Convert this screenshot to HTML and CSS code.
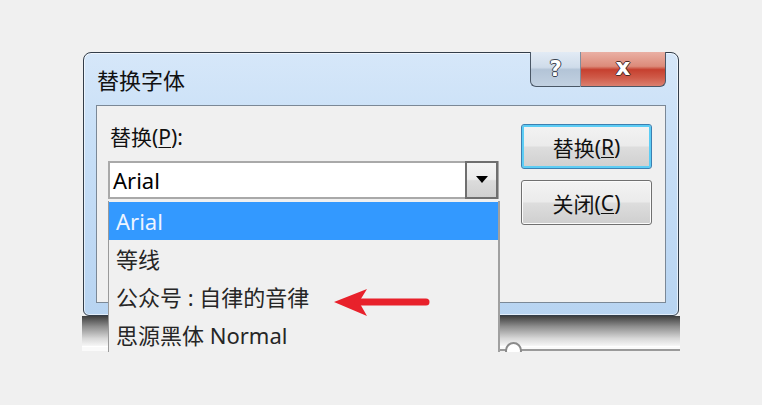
FILE: index.html
```html
<!DOCTYPE html>
<html lang="zh-CN">
<head>
<meta charset="utf-8">
<title>替换字体</title>
<link rel="stylesheet" href="styles.css">
</head>
<body>
<div class="shot">
  <div class="window">
    <div class="titlebar">
      <span class="title">替换字体</span>
      <div class="caption">
        <div class="cap help">?</div>
        <div class="cap close">x</div>
      </div>
    </div>
    <div class="client">
      <div class="left">
        <div class="label">替换(<u>P</u>):</div>
        <div class="combo">
          <span class="combo-text">Arial</span>
          <span class="combo-btn"><svg width="12" height="7" viewBox="0 0 12 7"><path d="M0 0H12L6 7Z" fill="#000"/></svg></span>
        </div>
      </div>
      <div class="right">
        <div class="btn default">替换(<u>R</u>)</div>
        <div class="btn">关闭(<u>C</u>)</div>
      </div>
    </div>
  </div>
  <div class="below">
    <div class="shadow"></div>
    <div class="strip"><span class="knob"></span></div>
  </div>
  <ul class="list">
    <li class="item selected">Arial</li>
    <li class="item">等线</li>
    <li class="item">公众号 : 自律的音律</li>
    <li class="item">思源黑体 Normal</li>
  </ul>
  <svg class="arrow" width="98" height="30" viewBox="0 0 98 30">
    <path d="M2 14 L35 1 L27 14 L35 28 Z" fill="#e8212b"/>
    <path d="M26 14 H94" stroke="#e8212b" stroke-width="7" stroke-linecap="round"/>
  </svg>
</div>
</body>
</html>
```

FILE: styles.css
```css
* { box-sizing: border-box; }
html, body { margin: 0; padding: 0; }
body {
  background: #f0f0f0;
  width: 762px;
  height: 405px;
  overflow: hidden;
  font-family: "Noto Sans", "Noto Sans CJK SC", sans-serif;
  padding: 52px 0 0 82px;
}
.shot {
  position: relative;
  width: 598px;
  height: 300px;
  overflow: hidden;
}
.window {
  margin-left: 1px;
  width: 596px;
  height: 264px;
  border: 1px solid #333d49;
  border-radius: 8px 8px 6px 6px;
  background: linear-gradient(180deg, #d6e7f9 0%, #c9e0f7 30%, #bfd9f4 70%, #b8d4f1 100%);
  box-shadow: inset 0 0 0 1px rgba(255,255,255,0.6);
  display: flex;
  flex-direction: column;
}
.titlebar {
  height: 52px;
  display: flex;
  justify-content: space-between;
  align-items: flex-start;
  padding-left: 13px;
}
.title {
  font-size: 22px;
  line-height: 28px;
  margin-top: 13px;
  color: #111;
}
.caption {
  display: flex;
  margin-top: -1px;
  margin-right: 12px;
}
.cap {
  height: 35px;
  display: flex;
  align-items: center;
  justify-content: center;
  font-family: "DejaVu Sans", sans-serif;
  font-weight: bold;
  color: #fff;
  border: 1px solid #4a5766;
  border-top: none;
}
.help {
  width: 51px;
  border-radius: 0 0 0 6px;
  border-right: 1px solid #7f8fa0;
  background: linear-gradient(180deg, #e2ebf5 0%, #cfdcea 45%, #b3c4d7 52%, #c2d1e1 100%);
  font-size: 21px;
  text-shadow: -1px 0 #3a4450, 1px 0 #3a4450, 0 -1px #3a4450, 0 1px #3a4450;
}
.close {
  width: 85px;
  border-left: none;
  border-radius: 0 0 6px 0;
  background: linear-gradient(180deg, #eab0a4 0%, #dc8b7a 42%, #c6402f 52%, #cf5a48 75%, #db8070 100%);
  font-size: 23px;
  padding-bottom: 4px;
  text-shadow: -1px 0 #4a2a26, 1px 0 #4a2a26, 0 -1px #4a2a26, 0 1px #4a2a26;
}
.client {
  margin: 0 12px;
  width: 570px;
  height: 198px;
  border: 1px solid #7b8896;
  background: #f0f0f0;
  display: grid;
  grid-template-columns: 391px 131px;
  column-gap: 22px;
  align-items: start;
  padding: 17px 0 0 11px;
}
.label {
  font-size: 21px;
  line-height: 28px;
  padding-left: 2px;
  margin-bottom: 10px;
  color: #111;
}
.label u, .btn u { text-underline-offset: 2px; text-decoration-thickness: 1px; }
.combo {
  height: 38px;
  border: 2px solid #a9a9a9;
  border-right-width: 1px;
  background: #fff;
  display: flex;
  align-items: stretch;
}
.combo-text {
  flex: 1;
  font-size: 22px;
  line-height: 34px;
  padding-left: 3px;
  color: #000;
}
.combo-btn {
  width: 33px;
  margin: -2px 0 -2px 0;
  border: 2px solid #6f6f6f;
  background: linear-gradient(180deg, #f4f4f4 0%, #ececec 48%, #dcdcdc 52%, #d0d0d0 100%);
  display: flex;
  align-items: center;
  justify-content: center;
  padding-bottom: 2px;
}
.right {
  display: flex;
  flex-direction: column;
  gap: 11px;
  margin-top: 1px;
}
.btn {
  height: 45px;
  border: 1px solid #707070;
  border-radius: 3px;
  background: linear-gradient(180deg, #f3f3f3 0%, #ebebeb 48%, #dddddd 52%, #cfcfcf 100%);
  box-shadow: inset 0 0 0 1px #fbfbfb;
  font-size: 21px;
  display: flex;
  align-items: center;
  justify-content: center;
  color: #111;
}
.btn.default {
  border-color: #3c7fb1;
  box-shadow: inset 0 0 0 2px #5ccdf5;
}
.below {
  height: 35px;
  display: flex;
  flex-direction: column;
}
.shadow {
  height: 30px;
  background: linear-gradient(180deg, #3e3e3e 0%, #8e8e8e 35%, #d8d8d8 75%, #f7f7f7 100%);
}
.strip {
  position: relative;
  flex: 1;
  background: #fafafa;
  border-top: 1px solid #fff;
}
.strip::after {
  content: "";
  position: absolute;
  left: 418px;
  right: 0;
  top: 2px;
  border-top: 2px solid #9a9a9a;
}
.knob {
  position: absolute;
  left: 423px;
  top: -5px;
  width: 17px;
  height: 17px;
  border-radius: 50%;
  border: 2px solid #8a8a8a;
  background: #fff;
  z-index: 1;
}
.list {
  position: absolute;
  left: 26px;
  top: 149px;
  width: 392px;
  height: 160px;
  margin: 0;
  padding: 1px 0 0 0;
  list-style: none;
  background: #f0f0f0;
  border-left: 1px solid #9a9a9a;
  border-right: 2px solid #a0a0a0;
}
.item {
  height: 38px;
  font-size: 22px;
  line-height: 38px;
  padding-left: 7px;
  color: #262626;
  white-space: nowrap;
}
.item.selected {
  background: #3399ff;
  color: #eef4ff;
}
.arrow {
  position: absolute;
  left: 250px;
  top: 236px;
}
```
